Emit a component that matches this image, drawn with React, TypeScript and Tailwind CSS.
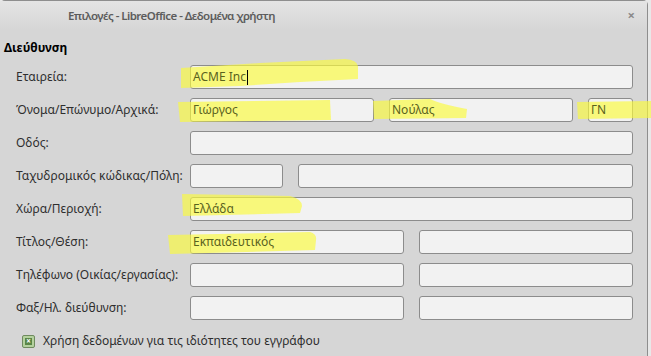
import React from "react";

type Field = { w?: string; value?: string; cursor?: boolean };

const rows: { label: string; fields: Field[] }[] = [
  { label: "Εταιρεία:", fields: [{ value: "ACME Inc", cursor: true }] },
  {
    label: "Όνομα/Επώνυμο/Αρχικά:",
    fields: [
      { w: "w-[184px]", value: "Γιώργος" },
      { w: "w-[184px]", value: "Νούλας" },
      { w: "w-[45px]", value: "ΓΝ" },
    ],
  },
  { label: "Οδός:", fields: [{}] },
  { label: "Ταχυδρομικός κώδικας/Πόλη:", fields: [{ w: "w-[93px]" }, {}] },
  { label: "Χώρα/Περιοχή:", fields: [{ value: "Ελλάδα" }] },
  { label: "Τίτλος/Θέση:", fields: [{ w: "w-[214px]", value: "Εκπαιδευτικός" }, {}] },
  { label: "Τηλέφωνο (Οικίας/εργασίας):", fields: [{ w: "w-[214px]" }, {}] },
  { label: "Φαξ/Ηλ. διεύθυνση:", fields: [{ w: "w-[214px]" }, {}] },
];

function Input({ field }: { field: Field }) {
  return (
    <div
      className={`${field.w ?? "flex-1"} flex h-[24px] items-center rounded-[3px] border border-[#8c8c8c] bg-[#f2f2f2] pl-[2px]`}
    >
      {field.value && (
        <span className="relative z-10 whitespace-nowrap text-[12px] text-[#5a621e]">
          {field.value}
        </span>
      )}
      {field.cursor && <span className="relative z-10 ml-px h-[15px] w-px bg-black" />}
    </div>
  );
}

// marker strokes drawn over the form
function Highlights() {
  const fill = "rgba(250,250,60,0.66)";
  return (
    <svg
      className="pointer-events-none absolute left-0 top-0"
      width={651}
      height={356}
      aria-hidden
    >
      <path d="M181 68 L260 63 L345 59 Q357 60 358 66 L358 79 L300 82 L240 86 L181 88 Z" fill={fill} />
      <path d="M178 102 L330 100 L331 120 L180 122 Z" fill={fill} />
      <path d="M373 101 L430 99 Q440 104 467 109 L466 118 L374 119 Z" fill={fill} />
      <path d="M577 102 L651 101 L651 118 L578 119 Z" fill={fill} />
      <path d="M182 194 L290 196 Q302 199 302 206 L300 213 L183 216 Z" fill={fill} />
      <path d="M168 235 L310 232 Q317 234 316 240 L315 250 L170 254 Z" fill={fill} />
    </svg>
  );
}

export default function App() {
  return (
    <div className="relative h-[356px] w-[651px] overflow-hidden bg-[#e8e8e8] font-['Noto_Sans',sans-serif] text-[12px] text-[#2e2e2e]">
      <div className="h-full w-[648px] rounded-t-[5px] border-r border-t border-[#8e8e8e] bg-[#d6d6d6]">
        <div className="flex h-[29px] items-center bg-gradient-to-b from-[#e4e4e4] to-[#d6d6d6] pl-[68px] pr-[12px]">
          <span className="flex-1 whitespace-nowrap text-[11.5px] font-semibold tracking-[-0.55px] text-[#5c5c5c]">
            Επιλογές - LibreOffice - Δεδομένα χρήστη
          </span>
          <span className="text-[13px] font-bold leading-none text-[#8a8a8a]">×</span>
        </div>

        <div className="mt-[9px] pl-[4px] text-[12px] font-bold leading-[18px] text-black">
          Διεύθυνση
        </div>

        <div className="mt-[8px] flex flex-col gap-[9px] pr-[14px]">
          {rows.map((row) => (
            <div key={row.label} className="flex items-center">
              <div className="w-[190px] shrink-0 whitespace-nowrap pl-[16px]">{row.label}</div>
              <div className="flex flex-1 gap-[15px]">
                {row.fields.map((f, i) => (
                  <Input key={i} field={f} />
                ))}
              </div>
            </div>
          ))}
        </div>

        <div className="mt-[12px] flex items-center gap-[8px] pl-[22px]">
          <span className="flex h-[13px] w-[13px] items-center justify-center rounded-[2px] border border-[#6f8a5e] bg-[#b4d19e]">
            <span className="flex h-[7px] w-[7px] items-center justify-center bg-[#5a8646] text-[8px] font-bold leading-none text-white">
              ×
            </span>
          </span>
          <span className="whitespace-nowrap">Χρήση δεδομένων για τις ιδιότητες του εγγράφου</span>
        </div>
      </div>
      <Highlights />
    </div>
  );
}
